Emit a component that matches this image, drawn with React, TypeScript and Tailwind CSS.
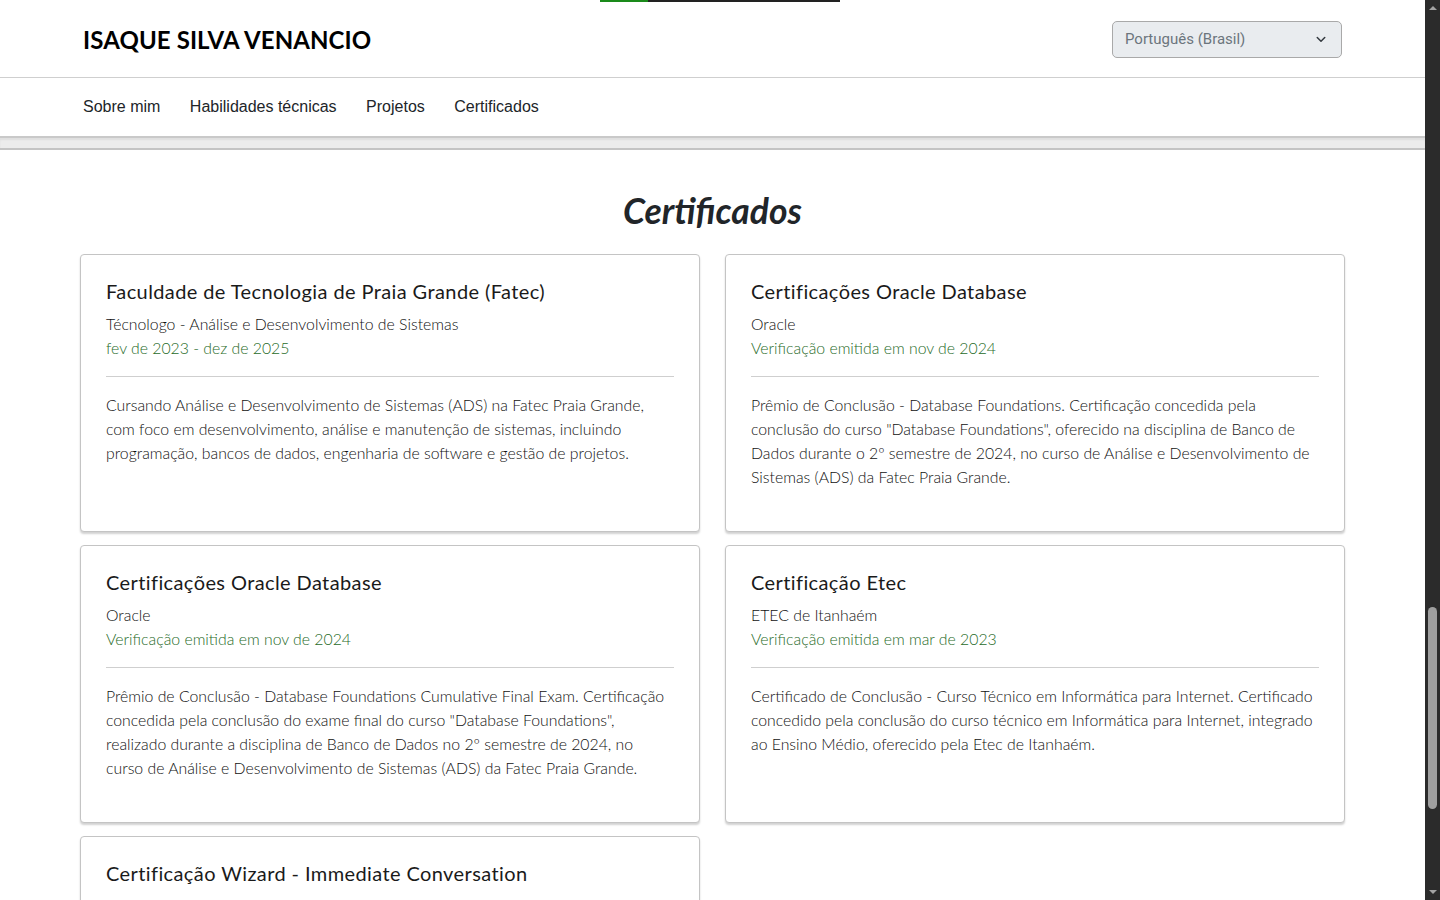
import React from 'react';

const cards = [
  {
    title: 'Faculdade de Tecnologia de Praia Grande (Fatec)',
    issuer: 'Técnologo - Análise e Desenvolvimento de Sistemas',
    date: 'fev de 2023 - dez de 2025',
    text: 'Cursando Análise e Desenvolvimento de Sistemas (ADS) na Fatec Praia Grande, com foco em desenvolvimento, análise e manutenção de sistemas, incluindo programação, bancos de dados, engenharia de software e gestão de projetos.',
  },
  {
    title: 'Certificações Oracle Database',
    issuer: 'Oracle',
    date: 'Verificação emitida em nov de 2024',
    text: 'Prêmio de Conclusão - Database Foundations. Certificação concedida pela conclusão do curso "Database Foundations", oferecido na disciplina de Banco de Dados durante o 2º semestre de 2024, no curso de Análise e Desenvolvimento de Sistemas (ADS) da Fatec Praia Grande.',
  },
  {
    title: 'Certificações Oracle Database',
    issuer: 'Oracle',
    date: 'Verificação emitida em nov de 2024',
    text: 'Prêmio de Conclusão - Database Foundations Cumulative Final Exam. Certificação concedida pela conclusão do exame final do curso "Database Foundations", realizado durante a disciplina de Banco de Dados no 2º semestre de 2024, no curso de Análise e Desenvolvimento de Sistemas (ADS) da Fatec Praia Grande.',
  },
  {
    title: 'Certificação Etec',
    issuer: 'ETEC de Itanhaém',
    date: 'Verificação emitida em mar de 2023',
    text: 'Certificado de Conclusão - Curso Técnico em Informática para Internet. Certificado concedido pela conclusão do curso técnico em Informática para Internet, integrado ao Ensino Médio, oferecido pela Etec de Itanhaém.',
  },
  {
    title: 'Certificação Wizard - Immediate Conversation',
    issuer: 'Wizard by Pearson',
    date: 'Verificação emitida em dez de 2019',
    text: 'Certificado de conclusão do curso de inglês.',
  },
];

function Card({ c }: { c: (typeof cards)[number] }) {
  return (
    <div className="bg-white border border-[#c4c4c4] rounded-[4px] shadow-[0_2px_2px_rgba(0,0,0,0.18)] px-[25px] pt-[22px] pb-[42px] text-[#212529]">
      <h3 className="text-[20px] leading-[28px] tracking-[0.4px] text-[#1a1a1a]">{c.title}</h3>
      <div className="font-light text-[15.8px] leading-[24px] text-[#111]">
        <p className="mt-[7px]">{c.issuer}</p>
        <p className="text-[#1f6b28]">{c.date}</p>
        <div className="mt-4 border-t border-[#cfcfcf]" />
        <p className="mt-4">{c.text}</p>
      </div>
    </div>
  );
}

export default function App() {
  return (
    <div className="flex h-[900px] overflow-hidden bg-white font-[Lato,sans-serif]">
      <div className="relative flex-1 min-w-0">
        <div className="absolute top-0 left-[600px] flex h-[2px]">
          <div className="w-[48px] bg-[#1a8a1a]" />
          <div className="w-[192px] bg-[#222]" />
        </div>

        <header className="bg-white">
          <div className="h-[78px] border-b border-[#cfcfcf]">
            <div className="mx-auto w-[1265px] px-[3px] h-full flex items-center justify-between">
              <h1 className="text-[24px] font-bold text-black tracking-[0.1px] pt-[3px]">ISAQUE SILVA VENANCIO</h1>
              <button className="w-[230px] h-[37px] mt-[1px] flex items-center justify-between pl-[12px] pr-[14px] bg-[#e9ecef] border border-[#a9a9a9] rounded-[5px] text-[15px] text-[#6c757d] font-[Roboto,sans-serif]">
                Português (Brasil)
                <svg width="12" height="12" viewBox="0 0 16 16" fill="none" stroke="#343a40" strokeWidth="2" strokeLinecap="round" strokeLinejoin="round">
                  <path d="M3 6l5 5 5-5" />
                </svg>
              </button>
            </div>
          </div>
          <nav className="h-[58px]">
            <div className="mx-auto w-[1265px] px-[3px] h-full flex items-center gap-[29.5px] text-[16px] text-[#212529] font-['Liberation_Sans',Arial,sans-serif]">
              <a>Sobre mim</a>
              <a>Habilidades técnicas</a>
              <a>Projetos</a>
              <a>Certificados</a>
            </div>
          </nav>
        </header>
        <div className="h-[14px] bg-[#ececec] border-t-2 border-[#c9c9c9] border-b-2 border-b-[#c4c4c4] shadow-[inset_0_2px_2px_rgba(0,0,0,0.06)]" />

        <main className="mx-auto w-[1265px]">
          <h2 className="mt-[41px] text-center text-[35.5px] leading-[40px] font-bold italic text-[#212529]">Certificados</h2>
          <div className="mt-[23px] grid grid-cols-2 gap-x-[25px] gap-y-[13px]">
            {cards.map((c, i) => (
              <Card key={i} c={c} />
            ))}
          </div>
        </main>
      </div>

      <div className="w-[15px] shrink-0 bg-[#2b2b2b] flex flex-col items-center">
        <div className="mt-[6px] w-0 h-0 border-l-[4px] border-r-[4px] border-b-[4px] border-l-transparent border-r-transparent border-b-[#a3a3a3]" />
        <div className="mt-[597px] w-[9px] h-[202px] rounded-full bg-[#9f9f9f]" />
        <div className="mt-auto mb-[6px] w-0 h-0 border-l-[4px] border-r-[4px] border-t-[4px] border-l-transparent border-r-transparent border-t-[#a3a3a3]" />
      </div>
    </div>
  );
}
